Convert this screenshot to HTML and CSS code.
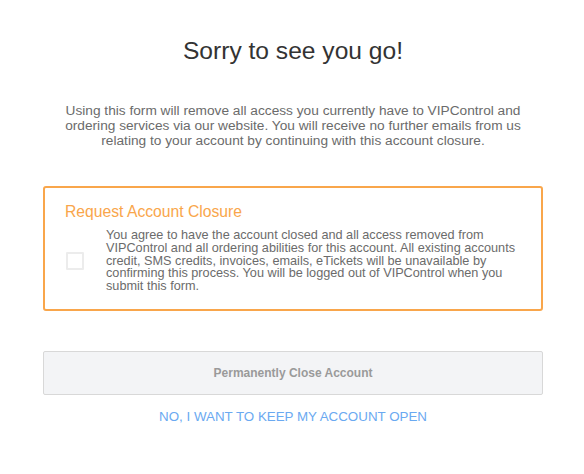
FILE: index.html
```html
<!DOCTYPE html>
<html>
<head>
<meta charset="utf-8">
<link rel="stylesheet" href="styles.css">
</head>
<body>
<div class="page">
  <h1 class="title">Sorry to see you go!</h1>
  <p class="intro">Using this form will remove all access you currently have to VIPControl and ordering services via our website. You will receive no further emails from us relating to your account by continuing with this account closure.</p>
  <div class="panel">
    <h2 class="panel-title">Request Account Closure</h2>
    <label class="agree">
      <span class="check"></span>
      <span class="agree-text">You agree to have the account closed and all access removed from VIPControl and all ordering abilities for this account. All existing accounts credit, SMS credits, invoices, emails, eTickets will be unavailable by confirming this process. You will be logged out of VIPControl when you submit this form.</span>
    </label>
  </div>
  <button class="close-btn" type="button">Permanently Close Account</button>
  <a class="keep-link" href="#">NO, I WANT TO KEEP MY ACCOUNT OPEN</a>
</div>
</body>
</html>
```
FILE: styles.css
```css
html, body {
  margin: 0;
  padding: 0;
  background: #fff;
}
body {
  font-family: "Liberation Sans", Arial, sans-serif;
  color: #555;
}
.page {
  width: 500px;
  margin: 0 0 0 43px;
  display: flex;
  flex-direction: column;
  align-items: stretch;
}
.title {
  margin: 36px 0 0;
  font-size: 24.6px;
  font-weight: 400;
  line-height: 30px;
  text-align: center;
  color: #333;
}
.intro {
  margin: 37px 10px 0;
  font-size: 13.7px;
  line-height: 15px;
  text-align: center;
  color: #6b6b6b;
}
.panel {
  margin-top: 38px;
  border: 2px solid #f9a64b;
  border-radius: 3px;
  padding: 14px 14px 16px 20px;
}
.panel-title {
  margin: 0;
  font-size: 15.7px;
  font-weight: 400;
  line-height: 20px;
  color: #f9a64b;
}
.agree {
  display: flex;
  align-items: center;
  gap: 22px;
  margin-top: 7px;
}
.check {
  flex: none;
  width: 14px;
  height: 14px;
  border: 2px solid #ececec;
  border-radius: 1px;
  margin-left: 1px;
}
.agree-text {
  font-size: 12.7px;
  line-height: 12.8px;
  color: #6b6b6b;
}
.close-btn {
  margin-top: 40px;
  height: 44px;
  border: 1px solid #d8d8d8;
  border-radius: 2px;
  background: #f3f4f6;
  color: #9a9a9a;
  font-family: inherit;
  font-size: 12px;
  font-weight: 700;
}
.keep-link {
  margin-top: 14px;
  align-self: center;
  font-size: 13.35px;
  line-height: 16px;
  color: #6aa9f1;
  text-decoration: none;
}
```
